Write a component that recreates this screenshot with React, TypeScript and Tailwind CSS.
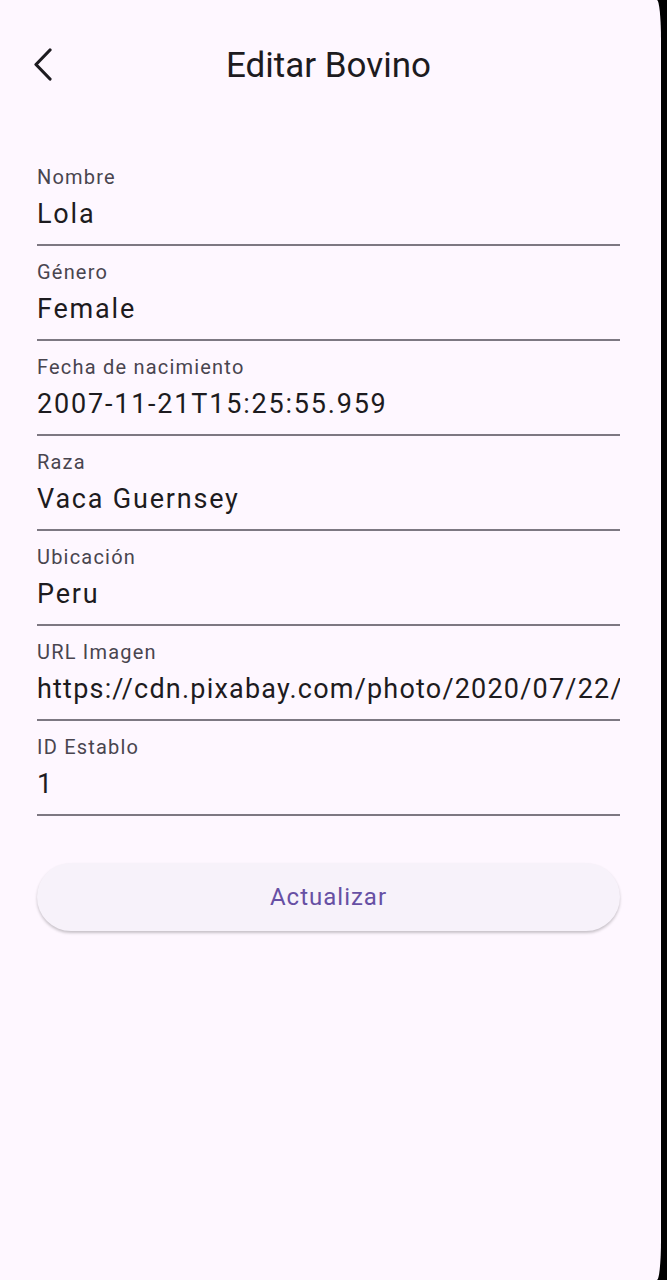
const FIELDS = [
  { label: 'Nombre', value: 'Lola' },
  { label: 'Género', value: 'Female' },
  { label: 'Fecha de nacimiento', value: '2007-11-21T15:25:55.959' },
  { label: 'Raza', value: 'Vaca Guernsey' },
  { label: 'Ubicación', value: 'Peru' },
  { label: 'URL Imagen', value: 'https://cdn.pixabay.com/photo/2020/07/22/10/35/cow-5428540_1280.jpg', tight: true },
  { label: 'ID Establo', value: '1' },
];

const Field = ({ label, value, tight }: { label: string; value: string; tight?: boolean }) => (
  <div className="h-[95px] flex flex-col pt-[14px]">
    <span className="text-[20px] leading-[23px] tracking-[1.2px] text-[#49454F]">{label}</span>
    <span
      className={`mt-[10px] text-[27px] leading-[31px] text-[#1D1B20] whitespace-nowrap overflow-hidden ${
        tight ? 'tracking-[1.2px]' : 'tracking-[1.8px]'
      }`}
    >
      {value}
    </span>
    <div className="mt-auto mb-[1px] h-[2px] bg-[#7d7882]" />
  </div>
);

const App = () => {
  return (
    <div className="flex h-[1280px] w-[667px] bg-black" style={{ fontFamily: 'Roboto, "Noto Sans", sans-serif' }}>
      <main className="w-[661px] h-full bg-[#FEF7FF] rounded-tr-[4px_40px] rounded-br-[4px_40px] flex flex-col">
        <header className="mt-[21px] h-[90px] flex items-center relative">
          <button aria-label="back" className="absolute left-[27px] top-[20px] w-[34px] h-[48px] flex items-center justify-center">
            <svg width="22" height="34" viewBox="0 0 22 34" fill="none">
              <path d="M17 2 L3 16.5 L17 31" stroke="#1D1B20" strokeWidth="3.2" strokeLinecap="round" strokeLinejoin="round" />
            </svg>
          </button>
          <h1 className="w-full text-center text-[35px] leading-[40px] text-[#1D1B20] -ml-[2px]">Editar Bovino</h1>
        </header>

        <form className="mt-[41px] pl-[37px] pr-[41px] flex flex-col">
          {FIELDS.map((f) => (
            <Field key={f.label} label={f.label} value={f.value} tight={f.tight} />
          ))}
          <button
            type="button"
            className="mt-[46px] h-[68px] rounded-full bg-[#F7F2FA] shadow-[0_2px_3px_rgba(0,0,0,0.22)] text-[24px] tracking-[1px] text-[#6750A4]"
          >
            Actualizar
          </button>
        </form>
      </main>
    </div>
  );
};

export default App;
